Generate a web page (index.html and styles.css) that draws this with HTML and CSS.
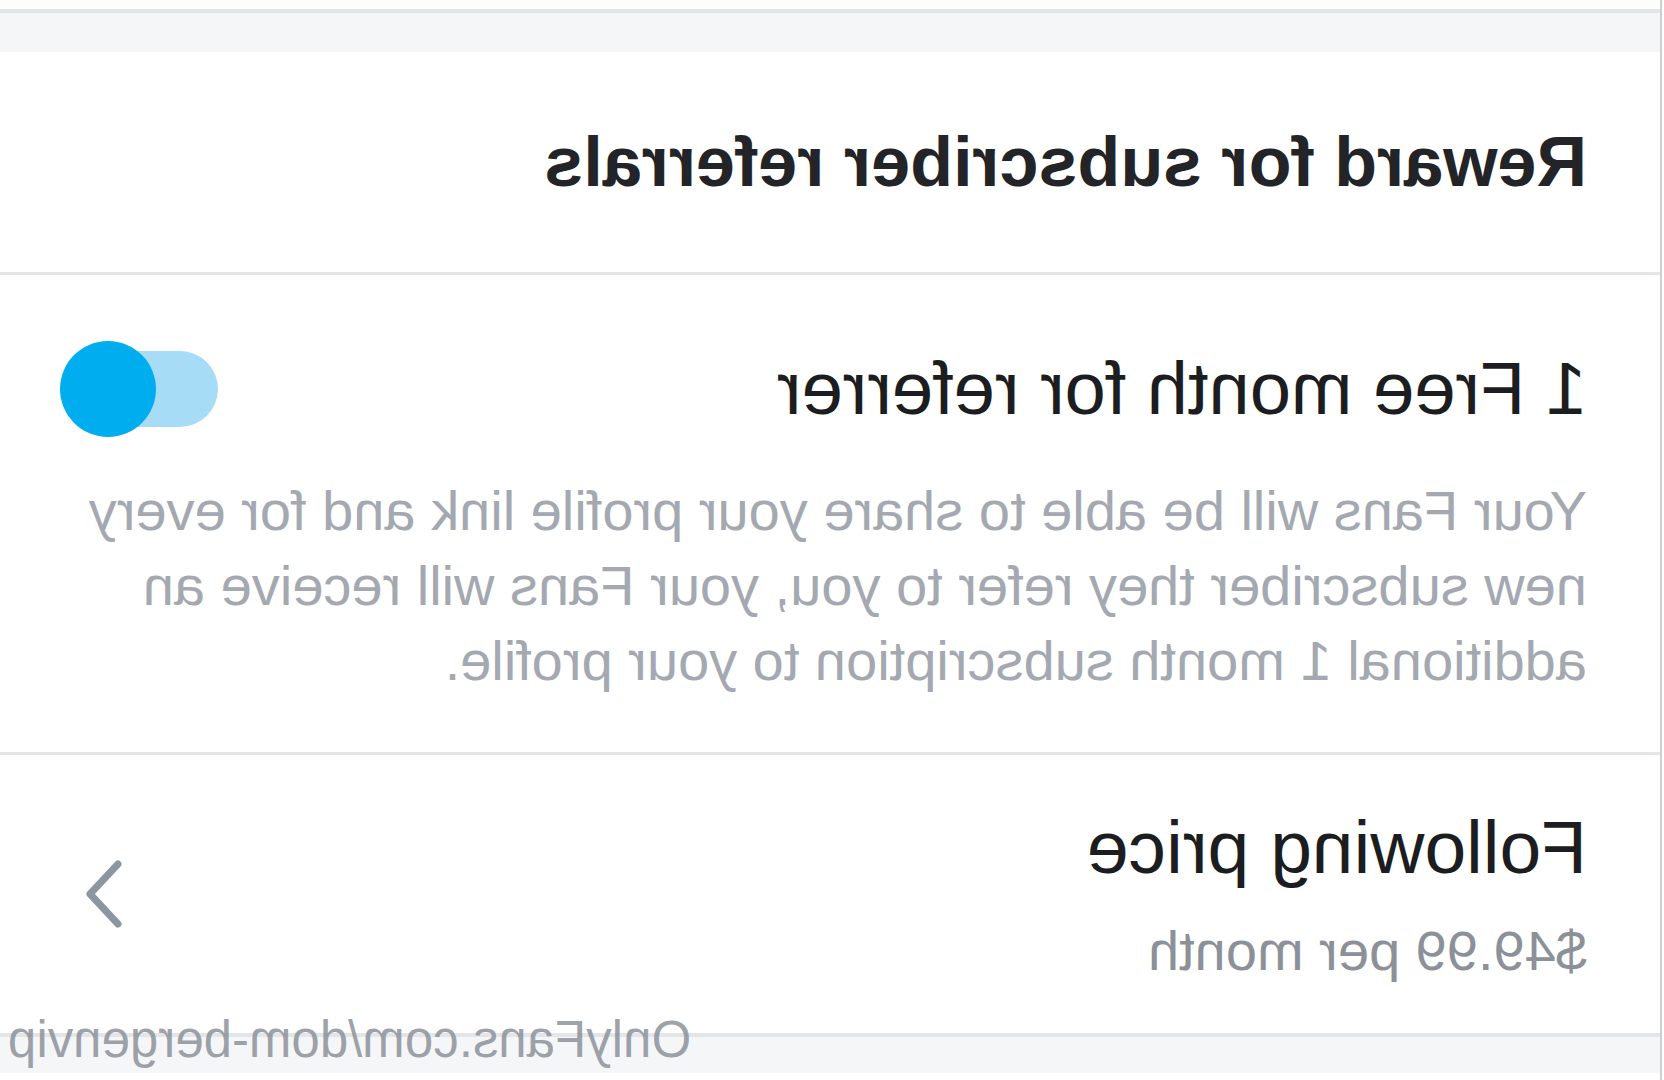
FILE: index.html
```html
<!DOCTYPE html>
<html lang="en">
<head>
<meta charset="utf-8">
<title>Subscription settings</title>
<link rel="stylesheet" href="styles.css">
</head>
<body>
<div class="mirror">
  <div class="frame">
    <div class="top-strip"></div>
    <div class="rule thick"></div>
    <div class="band"></div>
    <section class="section-head">
      <h2 class="head-title">Reward for subscriber referrals</h2>
    </section>
    <div class="rule"></div>
    <section class="toggle-section">
      <div class="toggle-row">
        <div class="row-title">1 Free month for referrer</div>
        <div class="switch" role="switch" aria-checked="true">
          <span class="switch-track"></span>
          <span class="switch-knob"></span>
        </div>
      </div>
      <p class="desc">Your Fans will be able to share your profile link and for every new subscriber they refer to you, your Fans will receive an additional 1 month subscription to your profile.</p>
    </section>
    <div class="rule"></div>
    <section class="price-section">
      <div class="price-text">
        <div class="row-title wide">Following price</div>
        <div class="price-sub">$49.99 per month</div>
      </div>
      <svg class="chevron" width="44" height="72" viewBox="0 0 44 72" aria-hidden="true">
        <path d="M8 6 L36 36 L8 66" fill="none" stroke="#8b96a2" stroke-width="7" stroke-linecap="round" stroke-linejoin="round"/>
      </svg>
    </section>
    <div class="rule thick"></div>
    <div class="band bottom"></div>
  </div>
  <div class="watermark">OnlyFans.com/dom-bergenvip</div>
</div>
</body>
</html>
```
FILE: styles.css
```css
html, body {
  margin: 0;
  padding: 0;
  background: #ffffff;
}
body {
  font-family: "Liberation Sans", Arial, sans-serif;
}
.mirror {
  position: relative;
  width: 1664px;
  height: 1080px;
  overflow: hidden;
  transform: scaleX(-1);
  background: #ffffff;
}
.frame {
  margin-left: 2px;
  border-left: 2px solid #cdcfd2;
  height: 1080px;
  box-sizing: border-box;
  display: flex;
  flex-direction: column;
}
.top-strip {
  height: 9px;
  background: #fdfdfc;
}
.rule {
  height: 3px;
  background: #e3e5e8;
  flex: none;
}
.rule.thick {
  height: 4px;
}
.band {
  height: 39px;
  background: #f5f6f8;
  flex: none;
}
.band.bottom {
  height: 36px;
}
.section-head {
  height: 220px;
  flex: none;
  display: flex;
  align-items: center;
  padding-left: 73px;
}
.head-title {
  margin: 0;
  font-size: 70px;
  line-height: 1;
  font-weight: 700;
  color: #232427;
}
.toggle-section {
  flex: none;
  padding: 66px 60px 54px 73px;
}
.toggle-row {
  display: flex;
  align-items: center;
  justify-content: space-between;
}
.row-title {
  font-size: 74px;
  line-height: 1;
  color: #1c1d20;
}
.row-title.wide {
  font-size: 75px;
}
.switch {
  position: relative;
  width: 158px;
  height: 96px;
  flex: none;
}
.switch-track {
  position: absolute;
  left: 0;
  top: 10px;
  width: 140px;
  height: 76px;
  border-radius: 38px;
  background: #a6dcf6;
}
.switch-knob {
  position: absolute;
  right: 0;
  top: 0;
  width: 96px;
  height: 96px;
  border-radius: 50%;
  background: #00aeef;
}
.desc {
  margin: 36px 0 0 0;
  width: 1530px;
  font-size: 56px;
  line-height: 75px;
  color: #a4a9b1;
}
.price-section {
  flex: none;
  height: 278px;
  box-sizing: border-box;
  padding: 0 82px 0 73px;
  display: flex;
  align-items: center;
  justify-content: space-between;
}
.price-sub {
  margin-top: 38px;
  font-size: 56px;
  line-height: 1;
  color: #8c9199;
}
.chevron {
  display: block;
  flex: none;
}
.watermark {
  position: absolute;
  right: 8px;
  top: 1014px;
  font-size: 51px;
  line-height: 1;
  color: rgba(140, 146, 154, 0.85);
  white-space: nowrap;
}
```
